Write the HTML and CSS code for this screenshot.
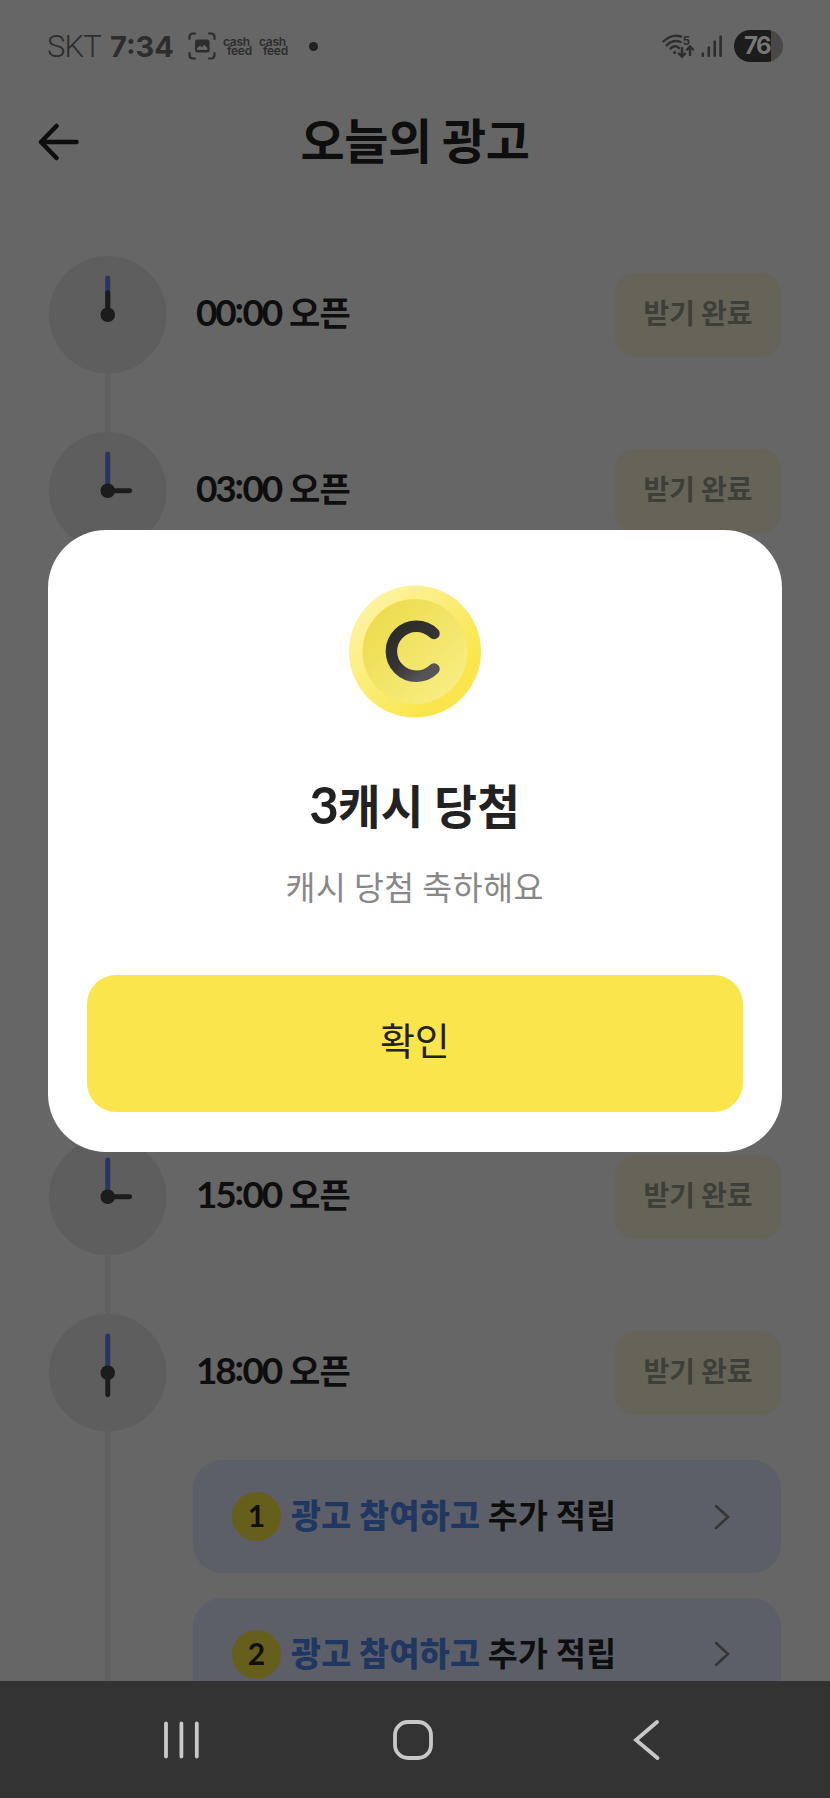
FILE: index.html
```html
<!DOCTYPE html>
<html lang="ko">
<head>
<meta charset="utf-8">
<title>오늘의 광고</title>
<link rel="stylesheet" href="styles.css">
</head>
<body>
<div class="screen">
  <div class="status">
    <span class="carrier">SKT</span>
    <span class="time">7:34</span>
    <svg class="capture" width="28" height="28" viewBox="0 0 28 28" fill="none" stroke="currentColor" stroke-width="2.2" stroke-linecap="round"><path d="M1.500 7V5Q1.500 1.500 5 1.500H7M21 1.500h2q3.500 0 3.500 3.500v2M26.500 21v2q0 3.500-3.500 3.500h-2M7 26.500H5q-3.500 0-3.500-3.500v-2"/><rect x="7" y="7.500" width="14.500" height="13" rx="2.500" fill="currentColor" stroke="none"/><path d="M9 18v-2l3-2.200 2 1.500 2-2.500 3.300 3v2.200z" fill="#666" stroke="none"/></svg>
    <span class="feed"><span>cash</span><span class="feed-low">feed</span></span>
    <span class="feed feed-second"><span>cash</span><span class="feed-low">feed</span></span>
    <span class="dot"></span>
    <span class="spacer"></span>
    <svg class="wifi" width="32" height="26" viewBox="0 0 32 26" fill="none" stroke="currentColor" stroke-width="2.400" stroke-linecap="round"><path d="M1.500 8.500Q9.500 .8 19 3.500M4.700 12.300Q11 6 18.500 9M8.500 15.500Q13 11.500 17 15"/><circle cx="12.700" cy="19.500" r="1.600" fill="currentColor" stroke="none"/><path d="M20 15v8.500M17 20.700l3 3 3-3M28 22v-8.500M25 16.500l3-3 3 3"/><text x="20.500" y="12" class="wifi-band">5</text></svg>
    <svg class="signal" width="22" height="24" viewBox="0 0 22 24" stroke="currentColor" stroke-width="2.600" stroke-linecap="round"><path d="M1.800 19.500v2.200M7.800 13.500v8.200M13.700 7.500v14.200M19.600 2.500v19.200"/></svg>
    <span class="battery">76</span>
  </div>

  <header class="header">
    <svg class="back" width="42" height="38" viewBox="0 0 42 38" fill="none" stroke="currentColor" stroke-width="4.500" stroke-linecap="round" stroke-linejoin="round"><path d="M19.500 3L4 19l15.500 16M4 19h35.500"/></svg>
    <h1 class="title">오늘의 광고</h1>
  </header>

  <main class="list">
    <section class="slot"><svg class="clock" viewBox="0 0 118 118"><circle cx="59" cy="59" r="59" class="face"/><path d="M59 59V22" class="minute"/><path d="M59 59V37" class="hour"/><circle cx="59" cy="59" r="7.300" class="hub"/></svg><span class="open"><span class="digits">00<span class="colon">:</span>00</span> 오픈</span><button class="done">받기 완료</button></section>
    <section class="slot"><svg class="clock" viewBox="0 0 118 118"><circle cx="59" cy="59" r="59" class="face"/><path d="M59 59V22" class="minute"/><path d="M59 59H81" class="hour"/><circle cx="59" cy="59" r="7.300" class="hub"/></svg><span class="open"><span class="digits">03<span class="colon">:</span>00</span> 오픈</span><button class="done">받기 완료</button></section>
    <section class="slot"></section>
    <section class="slot"></section>
    <section class="slot"></section>
    <section class="slot"><svg class="clock" viewBox="0 0 118 118"><circle cx="59" cy="59" r="59" class="face"/><path d="M59 59V22" class="minute"/><path d="M59 59H81" class="hour"/><circle cx="59" cy="59" r="7.300" class="hub"/></svg><span class="open"><span class="digits">15<span class="colon">:</span>00</span> 오픈</span><button class="done">받기 완료</button></section>
    <section class="slot"><svg class="clock" viewBox="0 0 118 118"><circle cx="59" cy="59" r="59" class="face"/><path d="M59 59V22" class="minute"/><path d="M59 59V81" class="hour"/><circle cx="59" cy="59" r="7.300" class="hub"/></svg><span class="open"><span class="digits">18<span class="colon">:</span>00</span> 오픈</span><button class="done">받기 완료</button></section>
    <div class="ads">
      <div class="ad"><span class="num">1</span><span class="ad-text"><b>광고 참여하고</b> 추가 적립</span><svg class="chev" width="18" height="28" viewBox="0 0 18 28"><path d="M3 3L15 14 3 25"/></svg></div>
      <div class="ad"><span class="num">2</span><span class="ad-text"><b>광고 참여하고</b> 추가 적립</span><svg class="chev" width="18" height="28" viewBox="0 0 18 28"><path d="M3 3L15 14 3 25"/></svg></div>
    </div>
  </main>

  <nav class="nav">
    <svg width="40" height="42" viewBox="0 0 40 42"><path d="M5 4.500v33M20.400 4.500v33M35.800 4.500v33"/></svg>
    <svg class="home" width="44" height="44" viewBox="0 0 44 44"><rect x="4" y="4" width="36" height="36" rx="13"/></svg>
    <svg width="30" height="44" viewBox="0 0 30 44"><path d="M25 4L4 22l21.500 18"/></svg>
  </nav>

  <div class="modal" role="dialog">
    <svg class="coin" width="140" height="140" viewBox="0 0 140 140">
      <defs>
        <linearGradient id="rim" x1="0" y1="0" x2="1" y2="1"><stop offset=".15" stop-color="#fdf3a0"/><stop offset=".75" stop-color="#fae64c"/></linearGradient>
        <linearGradient id="plate" x1="0.100" y1="0.100" x2=".9" y2=".9"><stop offset="0" stop-color="#ecdb4b"/><stop offset="1" stop-color="#f9ee84"/></linearGradient>
        <linearGradient id="letter" x1="0" y1="0" x2=".7" y2="1"><stop offset="0" stop-color="#2a2a28"/><stop offset=".6" stop-color="#343434"/><stop offset="1" stop-color="#555"/></linearGradient>
      </defs>
      <circle cx="70" cy="69.500" r="66" fill="url(#rim)"/>
      <circle cx="70" cy="69.500" r="52.500" fill="url(#plate)"/>
      <path d="M89 51.500A25 25 0 1 0 89 87" fill="none" stroke="url(#letter)" stroke-width="11.500" stroke-linecap="round"/>
    </svg>
    <h2 class="modal-title"><span class="count">3</span>캐시 당첨</h2>
    <p class="modal-sub">캐시 당첨 축하해요</p>
    <button class="confirm">확인</button>
  </div>
</div>
</body>
</html>
```
FILE: styles.css
```css
* { box-sizing: border-box; margin: 0; padding: 0; }
body { font-family: "Noto Sans CJK KR", sans-serif; background: #666; }
button { font: inherit; border: 0; }
.screen { position: relative; width: 830px; height: 1798px; overflow: hidden; background: #666; display: flex; flex-direction: column; }

.status { flex: none; height: 92px; padding: 0 47px 0 47px; display: flex; align-items: center; color: #2d2d2d; font-family: Roboto, sans-serif; line-height: 1; }
.carrier { width: 63px; font-size: 31px; font-weight: 300; letter-spacing: -.8px; }
.time { width: 78px; font-family: Inter, sans-serif; font-size: 29px; font-weight: 700; letter-spacing: 0; }
.feed { display: flex; flex-direction: column; width: 30px; margin-left: 7px; font: 600 12px/9px Inter, sans-serif; letter-spacing: -.3px; }
.feed-second { margin-left: 6px; }
.feed-low { padding-left: 4px; }
.dot { width: 9px; height: 9px; border-radius: 50%; background: #222; margin-left: 20px; }
.spacer { flex: 1; }
.wifi { margin-right: 7px; }
.wifi-band { font: 600 13px Roboto, sans-serif; fill: currentColor; stroke: none; }
.signal { margin-right: 11px; }
.battery { width: 49px; height: 32px; border-radius: 16px; background: linear-gradient(90deg, #1c1c1c 37px, #484848 37px); color: #777; font: 700 24px/32px Inter, sans-serif; letter-spacing: -1.500px; padding-left: 10px; }

.header { flex: none; height: 100px; display: grid; grid-template-columns: 115px 600px 115px; align-items: center; color: #0e0e0e; }
.back { margin-left: 37px; }
.title { text-align: center; font-size: 48px; font-weight: 700; line-height: 60px; padding-bottom: 9px; letter-spacing: -.4px; word-spacing: -3px; }

.list { flex: 1; min-height: 0; overflow: hidden; padding: 63.700px 49px 0; background: linear-gradient(#606060, #606060) 105px 120px / 5px 100% no-repeat; }
.slot { height: 176.400px; display: grid; grid-template-columns: 147px 1fr 166px; align-items: start; }
.clock { width: 117.500px; height: 117.500px; display: block; }
.face { fill: #5e5e5e; }
.minute { stroke: #2a3561; stroke-width: 5; stroke-linecap: round; }
.hour { stroke: #1c1c1c; stroke-width: 5; stroke-linecap: round; }
.hub { fill: #1c1c1c; }
.open { display: block; font-size: 34px; font-weight: 700; line-height: 111px; letter-spacing: -.7px; word-spacing: -1px; color: #0e0e0e; white-space: pre; }
.digits { font-family: Lato, sans-serif; font-size: 37px; letter-spacing: -2.200px; }
.colon { line-height: 1; vertical-align: 3px; letter-spacing: -1.500px; }
.done { height: 84px; margin-top: 17px; border-radius: 20px; background: #666458; color: #3f3f3a; font-size: 28px; font-weight: 700; line-height: 77px; letter-spacing: 0; word-spacing: -2px; padding-bottom: 5px; }
.ads { margin: -30px 0 0 144px; display: flex; flex-direction: column; gap: 24.500px; }
.ad { height: 113px; border-radius: 29px; background: #5c5f67; display: flex; align-items: center; padding: 0 50px 0 39px; }
.num { width: 49px; height: 49px; border-radius: 50%; background: #665f1c; color: #0e0e0a; font-family: Lato, sans-serif; font-size: 30px; font-weight: 700; line-height: 47px; text-align: center; }
.ad-text { flex: 1; margin-left: 10px; padding-bottom: 6px; font-size: 32.500px; font-weight: 700; letter-spacing: .4px; word-spacing: -2px; color: #0e0e0e; white-space: nowrap; }
.ad-text b { color: #203761; }
.chev path { fill: none; stroke: #353535; stroke-width: 2.500; stroke-linecap: round; }

.nav { flex: none; height: 117px; background: #333; display: flex; justify-content: space-between; align-items: center; padding: 0 168px 0 161px; }
.nav svg { fill: none; stroke: #c8c8c8; stroke-width: 3.800; stroke-linecap: round; }
.nav .home { margin-left: -7px; }

.modal { position: absolute; left: 47.500px; top: 529.500px; width: 734.500px; height: 622px; border-radius: 58px; background: #fff; padding: 52px 39px 0; display: flex; flex-direction: column; align-items: center; }
.modal-title { margin-top: 47px; font-size: 46.500px; line-height: 70px; font-weight: 700; letter-spacing: .3px; word-spacing: -3px; color: #222; }
.count { font-family: Lato, sans-serif; font-size: 51px; line-height: 1; letter-spacing: -1px; }
.modal-sub { margin-top: 22px; font-size: 32.500px; line-height: 50px; font-weight: 400; letter-spacing: .5px; word-spacing: -2px; color: #888; }
.confirm { margin-top: 64px; width: 656px; height: 137px; border-radius: 29px; background: #fae64c; color: #222; font-size: 38px; font-weight: 400; line-height: 127px; padding-bottom: 9px; letter-spacing: -.3px; }
```
